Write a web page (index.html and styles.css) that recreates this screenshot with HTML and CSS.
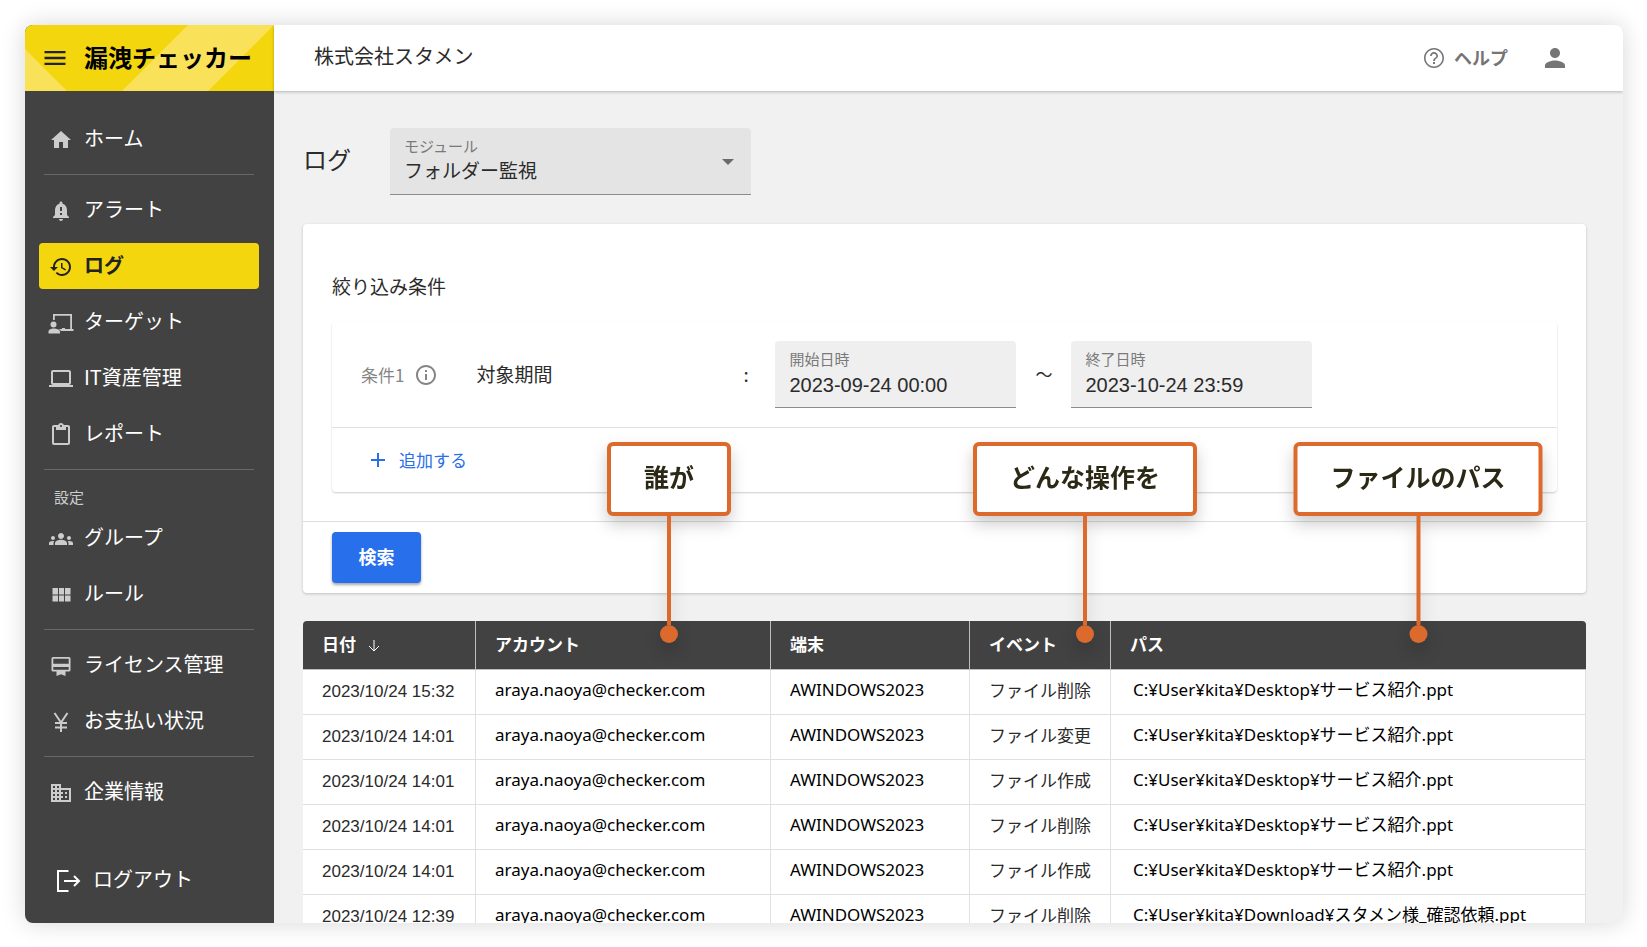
FILE: index.html
```html
<!DOCTYPE html>
<html lang="ja">
  <head>
    <meta charset="UTF-8" />
    <meta name="viewport" content="width=device-width, initial-scale=1.0" />
    <title>漏洩チェッカー | ログ</title>
    <link rel="stylesheet" href="styles.css">
  </head>
  <body>
    <div class="app">
      <aside class="sidebar">
        <div class="brand">
          <svg class="brand-bg" viewBox="0 0 249 66" preserveAspectRatio="none" aria-hidden="true">
            <path d="M0 24L42 66H0zM163 0H249L183 66H97z" />
          </svg>
          <button type="button" class="icon-button" aria-label="メニュー">
            <svg class="menu-icon" viewBox="0 0 24 24"><path d="M3 18h18v-2H3v2zm0-5h18v-2H3v2zm0-7v2h18V6H3z" /></svg>
          </button>
          <a href="#" class="logo">漏洩チェッカー</a>
        </div>

        <nav class="nav">
          <a href="#" class="nav-item">
            <svg class="icon" viewBox="0 0 24 24"><path d="M10 20v-6h4v6h5v-8h3L12 3 2 12h3v8z" /></svg>
            ホーム
          </a>
          <hr class="nav-line" />
          <a href="#" class="nav-item">
            <svg class="icon" viewBox="0 0 24 24"><path d="M18 16v-5c0-3.07-1.64-5.64-4.5-6.32V4c0-.83-.67-1.5-1.5-1.5s-1.5.67-1.5 1.5v.68C7.63 5.36 6 7.92 6 11v5l-2 2v1h16v-1l-2-2zm-5 0h-2v-2h2v2zm0-4h-2V8h2v4zm-1 10c1.1 0 2-.9 2-2h-4c0 1.1.89 2 2 2z" /></svg>
            アラート
          </a>
          <a href="#" class="nav-item active">
            <svg class="icon" viewBox="0 0 24 24"><path d="M13 3c-4.97 0-9 4.03-9 9H1l3.89 3.89.07.14L9 12H6c0-3.87 3.13-7 7-7s7 3.13 7 7-3.13 7-7 7c-1.93 0-3.68-.79-4.94-2.06l-1.42 1.42C8.27 19.99 10.51 21 13 21c4.97 0 9-4.03 9-9s-4.03-9-9-9zm-1 5v5l4.28 2.54.72-1.21-3.5-2.08V8H12z" /></svg>
            ログ
          </a>
          <a href="#" class="nav-item">
            <svg class="icon" viewBox="0 0 24 24"><path d="M4 3h19v15h1.500v2H12l-2-2h3v-1h3v1h5.200V4.800H5.800V9H4zM4.500 10.500a3 3 0 1 1 0 6 3 3 0 0 1 0-6zM4.800 17.500c2.600 0 6.200 1 6.200 3.300V22.500H-.5v-1.700c0-2.300 2.700-3.300 5.300-3.300z" /></svg>
            ターゲット
          </a>
          <a href="#" class="nav-item">
            <svg class="icon" viewBox="0 0 24 24"><path d="M20 18c1.1 0 2-.9 2-2V5c0-1.100-.9-2-2-2H4c-1.100 0-2 .9-2 2v11c0 1.100.9 2 2 2H0v2h24v-2h-4zM4 5h16v11H4V5z" /></svg>
            IT資産管理
          </a>
          <a href="#" class="nav-item">
            <svg class="icon" viewBox="0 0 24 24"><path d="M19 2h-4.180C14.400.84 13.300 0 12 0c-1.300 0-2.400.84-2.820 2H5c-1.100 0-2 .9-2 2v16c0 1.100.9 2 2 2h14c1.100 0 2-.9 2-2V4c0-1.100-.9-2-2-2zm-7 0c.55 0 1 .45 1 1s-.45 1-1 1-1-.45-1-1 .45-1 1-1zm7 18H5V4h2v3h10V4h2v16z" /></svg>
            レポート
          </a>
          <hr class="nav-line" />
          <p class="nav-heading">設定</p>
          <a href="#" class="nav-item">
            <svg class="icon" viewBox="0 0 24 24"><path d="M12 12.750c1.630 0 3.070.39 4.240.9 1.080.48 1.760 1.560 1.760 2.730V18H6v-1.610c0-1.180.68-2.260 1.760-2.730 1.170-.52 2.610-.91 4.240-.91zM4 13c1.100 0 2-.9 2-2s-.9-2-2-2-2 .9-2 2 .9 2 2 2zm1.130 1.100c-.37-.06-.74-.1-1.130-.1-.99 0-1.930.21-2.780.58C.48 14.900 0 15.620 0 16.430V18h4.500v-1.610c0-.83.23-1.610.63-2.290zM20 13c1.100 0 2-.9 2-2s-.9-2-2-2-2 .9-2 2 .9 2 2 2zm4 3.430c0-.81-.48-1.530-1.220-1.850-.85-.37-1.790-.58-2.780-.58-.39 0-.76.04-1.130.1.400.68.63 1.460.63 2.290V18H24v-1.570zM12 6c1.660 0 3 1.340 3 3s-1.340 3-3 3-3-1.340-3-3 1.340-3 3-3z" /></svg>
            グループ
          </a>
          <a href="#" class="nav-item">
            <svg class="icon" viewBox="0 0 24 24"><path d="M3.500 11.500h5.500V5H3.500v6.500zm0 7h5.500v-6H3.500v6zm6.500 0h5v-6h-5v6zm6 0h5.500v-6H16v6zm-6-7h5V5h-5v6.500zM16 5v6.500h5.500V5z" /></svg>
            ルール
          </a>
          <hr class="nav-line" />
          <a href="#" class="nav-item">
            <svg class="icon" viewBox="0 0 24 24"><path fill-rule="evenodd" d="M4 3h16a1.500 1.500 0 0 1 1.500 1.500v11.500a1.500 1.500 0 0 1-1.500 1.500h-3.500V22L12 20.300 7.500 22v-4.500H4A1.500 1.500 0 0 1 2.500 16V4.500A1.500 1.500 0 0 1 4 3zM4.300 4.700v5h15.400v-5zM4.300 13v2.700h15.400V13z" /></svg>
            ライセンス管理
          </a>
          <a href="#" class="nav-item">
            <svg class="icon line" viewBox="0 0 24 24"><path d="M5.500 3L12 12.500 18.500 3M12 12.500V22M6 13h12M6 17.500h12" /></svg>
            お支払い状況
          </a>
          <hr class="nav-line" />
          <a href="#" class="nav-item">
            <svg class="icon" viewBox="0 0 24 24"><path d="M12 7V3H2v18h20V7H12zM6 19H4v-2h2v2zm0-4H4v-2h2v2zm0-4H4V9h2v2zm0-4H4V5h2v2zm4 12H8v-2h2v2zm0-4H8v-2h2v2zm0-4H8V9h2v2zm0-4H8V5h2v2zm10 12h-8v-2h2v-2h-2v-2h2v-2h-2V9h8v10zm-2-8h-2v2h2v-2zm0 4h-2v2h2v-2z" /></svg>
            企業情報
          </a>
          <a href="#" class="nav-item logout">
            <svg class="icon line" viewBox="0 0 24 24"><path d="M12.500 2H2v20h10.500M8 12h15M18 7l5 5-5 5" /></svg>
            ログアウト
          </a>
        </nav>
      </aside>

      <div class="content">
        <header class="topbar">
          <span class="company">株式会社スタメン</span>
          <a href="#" class="help">
            <svg class="icon" viewBox="0 0 24 24"><path d="M11 18h2v-2h-2v2zm1-16C6.480 2 2 6.480 2 12s4.480 10 10 10 10-4.480 10-10S17.520 2 12 2zm0 18.400c-4.640 0-8.400-3.760-8.400-8.400S7.360 3.600 12 3.600s8.400 3.760 8.400 8.400-3.760 8.400-8.400 8.400zM12 6c-2.210 0-4 1.790-4 4h1.700c0-1.300 1-2.300 2.300-2.300s2.300 1 2.300 2.300c0 2-3.200 1.750-3.200 5h1.800c0-2.250 3.100-2.500 3.100-5 0-2.210-1.790-4-4-4z" /></svg>
            ヘルプ
          </a>
          <button type="button" class="icon-button" aria-label="アカウント">
            <svg class="user-icon" viewBox="0 0 24 24"><path d="M12 12c2.210 0 4-1.790 4-4s-1.790-4-4-4-4 1.790-4 4 1.790 4 4 4zm0 2c-2.670 0-8 1.340-8 4v2h16v-2c0-2.660-5.330-4-8-4z" /></svg>
          </button>
        </header>

        <main class="main">
          <div class="page-head">
            <h1>ログ</h1>
            <div class="field module">
              <label for="module">モジュール</label>
              <select id="module">
                <option>フォルダー監視</option>
              </select>
              <svg class="caret" viewBox="0 0 12 6" aria-hidden="true"><path d="M0 0h12L6 6z" /></svg>
            </div>
          </div>

          <form class="card">
            <div class="card-body">
              <h2>絞り込み条件</h2>
              <div class="conditions">
                <div class="condition">
                  <span class="condition-no">条件1</span>
                  <svg class="icon info" viewBox="0 0 24 24"><path d="M11 7h2v2h-2zm0 4h2v6h-2zm1-9C6.480 2 2 6.480 2 12s4.480 10 10 10 10-4.480 10-10S17.520 2 12 2zm0 18c-4.410 0-8-3.590-8-8s3.590-8 8-8 8 3.590 8 8-3.590 8-8 8z" /></svg>
                  <span class="condition-name">対象期間</span>
                  <span class="colon">:</span>
                  <div class="field date">
                    <label for="from">開始日時</label>
                    <input type="text" id="from" value="2023-09-24 00:00" />
                  </div>
                  <span class="tilde">～</span>
                  <div class="field date">
                    <label for="to">終了日時</label>
                    <input type="text" id="to" value="2023-10-24 23:59" />
                  </div>
                </div>
                <div class="add-row">
                  <button type="button" class="add-button">
                    <svg class="plus" viewBox="0 0 16 16"><path d="M8 1v14M1 8h14" /></svg>
                    追加する
                  </button>
                </div>
              </div>
            </div>
            <div class="card-foot">
              <button type="submit" class="search-button">検索</button>
            </div>
          </form>

          <div class="table-wrap">
            <table class="log-table">
              <colgroup>
                <col class="col-date" />
                <col class="col-account" />
                <col class="col-device" />
                <col class="col-event" />
                <col />
              </colgroup>
              <thead>
                <tr>
                  <th>日付<svg class="sort" viewBox="0 0 14 14"><path d="M7 1v11M2 7l5 5 5-5" /></svg></th>
                  <th>アカウント</th>
                  <th>端末</th>
                  <th>イベント</th>
                  <th>パス</th>
                </tr>
              </thead>
              <tbody>
                <tr>
                  <td class="date-cell">2023/10/24 15:32</td>
                  <td class="text-cell">araya.naoya@checker.com</td>
                  <td class="text-cell">AWINDOWS2023</td>
                  <td>ファイル削除</td>
                  <td class="text-cell path">C:¥User¥kita¥Desktop¥サービス紹介.ppt</td>
                </tr>
                <tr>
                  <td class="date-cell">2023/10/24 14:01</td>
                  <td class="text-cell">araya.naoya@checker.com</td>
                  <td class="text-cell">AWINDOWS2023</td>
                  <td>ファイル変更</td>
                  <td class="text-cell path">C:¥User¥kita¥Desktop¥サービス紹介.ppt</td>
                </tr>
                <tr>
                  <td class="date-cell">2023/10/24 14:01</td>
                  <td class="text-cell">araya.naoya@checker.com</td>
                  <td class="text-cell">AWINDOWS2023</td>
                  <td>ファイル作成</td>
                  <td class="text-cell path">C:¥User¥kita¥Desktop¥サービス紹介.ppt</td>
                </tr>
                <tr>
                  <td class="date-cell">2023/10/24 14:01</td>
                  <td class="text-cell">araya.naoya@checker.com</td>
                  <td class="text-cell">AWINDOWS2023</td>
                  <td>ファイル削除</td>
                  <td class="text-cell path">C:¥User¥kita¥Desktop¥サービス紹介.ppt</td>
                </tr>
                <tr>
                  <td class="date-cell">2023/10/24 14:01</td>
                  <td class="text-cell">araya.naoya@checker.com</td>
                  <td class="text-cell">AWINDOWS2023</td>
                  <td>ファイル作成</td>
                  <td class="text-cell path">C:¥User¥kita¥Desktop¥サービス紹介.ppt</td>
                </tr>
                <tr>
                  <td class="date-cell">2023/10/24 12:39</td>
                  <td class="text-cell">araya.naoya@checker.com</td>
                  <td class="text-cell">AWINDOWS2023</td>
                  <td>ファイル削除</td>
                  <td class="text-cell path">C:¥User¥kita¥Download¥スタメン様_確認依頼.ppt</td>
                </tr>
              </tbody>
            </table>

            <!-- callouts pointing at the table header -->
            <div class="callout callout-who"><span>誰が</span></div>
            <div class="callout callout-what"><span>どんな操作を</span></div>
            <div class="callout callout-path"><span>ファイルのパス</span></div>
          </div>
        </main>
      </div>
    </div>
  </body>
</html>
```
FILE: styles.css
```css
* {
  box-sizing: border-box;
}
body {
  margin: 0;
  padding: 25px 24px 24px 25px;
  height: 100vh;
  background: #fff;
  color: #2b2b2b;
  font-family: "Noto Sans CJK JP", sans-serif;
  font-size: 17px;
}
a {
  color: inherit;
  text-decoration: none;
}
button,
input,
select {
  font-family: inherit;
  color: inherit;
}
h1,
h2,
p {
  margin: 0;
  font-weight: 400;
}
.app {
  display: flex;
  height: 100%;
  border-radius: 8px;
  overflow: hidden;
  background: #f1f1f1;
  box-shadow: 0 0 24px rgba(0, 0, 0, 0.16);
}
.icon {
  width: 24px;
  height: 24px;
  fill: currentColor;
  flex: none;
  overflow: visible;
}
.icon.line {
  fill: none;
  stroke: currentColor;
  stroke-width: 2;
}
.icon-button {
  display: flex;
  padding: 0;
  border: none;
  background: none;
  cursor: pointer;
}

/* sidebar */
.sidebar {
  width: 249px;
  flex: none;
  background: #424242;
  color: #fff;
}
.brand {
  position: relative;
  display: flex;
  align-items: center;
  gap: 15px;
  height: 66px;
  padding-left: 16px;
  background: #f4d60f;
  color: #222;
}
.brand-bg {
  position: absolute;
  inset: 0;
  width: 100%;
  height: 100%;
  fill: #f9e25a;
}
.brand .icon-button,
.logo {
  position: relative;
}
.menu-icon {
  width: 28px;
  height: 28px;
  fill: currentColor;
}
.logo {
  padding-bottom: 2px;
  color: #000;
  font-size: 24px;
  font-weight: 700;
  line-height: 32px;
}
.nav {
  display: flex;
  flex-direction: column;
  gap: 10px;
  padding: 25px 15px 0 14px;
}
.nav-item {
  display: flex;
  align-items: center;
  gap: 11px;
  height: 46px;
  padding: 0 10px 2px;
  border-radius: 4px;
  font-size: 20px;
  line-height: 44px;
}
.nav-item .icon {
  margin-top: 3px;
  color: #ccc;
}
.nav-item.active {
  background: #f4d60f;
  color: #222;
  font-weight: 700;
}
.nav-item.active .icon {
  color: #222;
}
.nav-item.logout {
  margin-top: 32px;
  padding-left: 17px;
  gap: 13px;
}
.nav-item.logout .icon {
  color: #fff;
}
.nav-line {
  width: calc(100% - 10px);
  margin: 2px auto;
  border: none;
  border-top: 1px solid #686868;
}
.nav-heading {
  height: 24px;
  margin-bottom: -1px;
  padding-left: 15px;
  color: #ccc;
  font-size: 15px;
  line-height: 30px;
}

/* top bar */
.content {
  flex: 1;
  min-width: 0;
}
.topbar {
  position: relative;
  display: flex;
  align-items: center;
  height: 66px;
  padding: 0 53px 0 40px;
  background: #fff;
  box-shadow: 0 1px 3px rgba(0, 0, 0, 0.25);
  color: #757575;
}
.company {
  flex: 1;
  padding-bottom: 4px;
  color: #2b2b2b;
  font-size: 20px;
  line-height: 28px;
}
.help {
  display: flex;
  align-items: center;
  gap: 8px;
  margin-right: 32px;
  padding-bottom: 2px;
  font-size: 18px;
  font-weight: 700;
}
.help .icon {
  margin-top: 2px;
}
.user-icon {
  width: 30px;
  height: 30px;
  fill: currentColor;
}

/* page */
.main {
  padding: 37px 37px 0 29px;
}
.page-head {
  display: flex;
  align-items: center;
  gap: 39px;
  margin-bottom: 29px;
}
h1 {
  padding-bottom: 5px;
  font-size: 24px;
  line-height: 32px;
}
.field {
  padding: 8px 14px;
  border-bottom: 1px solid #8c8c8c;
  border-radius: 4px 4px 0 0;
  background: #efefef;
}
.field label {
  display: block;
  color: #7a7a7a;
  font-size: 15px;
  line-height: 20px;
}
.field input,
.field select {
  display: block;
  width: 100%;
  height: 30px;
  padding: 0;
  border: none;
  outline: none;
  background: none;
  appearance: none;
}
.module {
  position: relative;
  width: 361px;
  background: #e4e4e4;
}
.module select {
  padding-bottom: 3px;
  font-size: 19px;
}
.caret {
  position: absolute;
  top: 31px;
  right: 17px;
  width: 12px;
  height: 6px;
  fill: #6b6b6b;
}
.card {
  margin-bottom: 28px;
  border-radius: 4px;
  background: #fff;
  box-shadow: 0 1px 3px rgba(0, 0, 0, 0.2);
}
.card-body {
  padding: 48px 29px 29px;
  border-bottom: 1px solid #dedede;
}
h2 {
  margin-bottom: 22px;
  font-size: 19px;
  line-height: 28px;
}
.conditions {
  border-radius: 4px;
  box-shadow: 0 1px 2px rgba(0, 0, 0, 0.2);
}
.condition {
  display: flex;
  align-items: center;
  padding: 19px 29px;
  border-bottom: 1px solid #e2e2e2;
}
.condition-no {
  color: #858585;
}
.info {
  margin: 0 38px 0 10px;
  color: #858585;
}
.condition-name {
  width: 267px;
  padding-bottom: 2px;
  font-size: 19px;
}
.colon {
  width: 32px;
  padding-bottom: 2px;
  font-size: 19px;
}
.date {
  width: 241px;
}
.date input {
  padding-top: 2px;
  font-family: "Liberation Sans", Arial, sans-serif;
  font-size: 20px;
}
.tilde {
  width: 55px;
  padding-bottom: 2px;
  text-align: center;
}
.add-row {
  padding: 16px 38px;
}
.add-button {
  display: flex;
  align-items: center;
  gap: 13px;
  padding: 0;
  border: none;
  background: none;
  color: #2b6fe8;
  font-size: 17px;
  line-height: 32px;
  cursor: pointer;
}
.plus {
  width: 16px;
  height: 16px;
  stroke: currentColor;
  stroke-width: 2;
}
.card-foot {
  padding: 10px 29px;
}
.search-button {
  display: block;
  width: 89px;
  height: 51px;
  padding: 0 0 4px;
  border: none;
  border-radius: 4px;
  background: #286fec;
  box-shadow: 0 2px 3px rgba(0, 0, 0, 0.35);
  color: #fff;
  font-size: 18px;
  font-weight: 700;
  cursor: pointer;
}

/* log table */
.table-wrap {
  position: relative;
}
.log-table {
  width: 100%;
  table-layout: fixed;
  border-collapse: separate;
  border-spacing: 0;
}
.col-date {
  width: 173px;
}
.col-account {
  width: 295px;
}
.col-device {
  width: 199px;
}
.col-event {
  width: 141px;
}
th {
  height: 49px;
  padding: 0 19px 3px;
  border-right: 1px solid #bdbdbd;
  border-bottom: 1px solid #bdbdbd;
  background: #424242;
  color: #fff;
  font-weight: 700;
  text-align: left;
}
th:first-child {
  border-radius: 4px 0 0 0;
}
th:last-child {
  border-right: none;
  border-radius: 0 4px 0 0;
}
td {
  height: 45px;
  padding: 0 0 4px 19px;
  border-right: 1px solid #e0e0e0;
  border-bottom: 1px solid #e0e0e0;
  background: #fff;
  line-height: 24px;
  white-space: nowrap;
}
.date-cell {
  padding-bottom: 1px;
  font-family: "Liberation Sans", Arial, sans-serif;
}
.text-cell {
  color: #000;
  font-family: "Noto Sans", "Noto Sans CJK JP", sans-serif;
}
.path {
  padding-left: 22px;
}
.sort {
  width: 14px;
  height: 14px;
  margin-left: 11px;
  vertical-align: -2px;
  fill: none;
  stroke: #fff;
  stroke-width: 1;
}

/* callouts */
.callout {
  position: absolute;
  top: -179px;
  display: flex;
  flex-direction: column;
  align-items: center;
  transform: translateX(-50%);
  filter: drop-shadow(0 8px 8px rgba(0, 0, 0, 0.2));
}
.callout span {
  padding: 0 33px 6px;
  border: 4px solid #dc6a2c;
  border-radius: 6px;
  background: #fff;
  color: #2b2916;
  font-size: 25px;
  font-weight: 700;
  line-height: 60px;
  white-space: nowrap;
}
.callout::before {
  content: "";
  order: 1;
  width: 4px;
  height: 109px;
  background: #dc6a2c;
}
.callout::after {
  content: "";
  order: 2;
  width: 18px;
  height: 18px;
  border-radius: 50%;
  background: #dc6a2c;
}
.callout-who {
  left: 366px;
}
.callout-what {
  left: 782px;
}
.callout-path {
  left: 1115px;
}
```
